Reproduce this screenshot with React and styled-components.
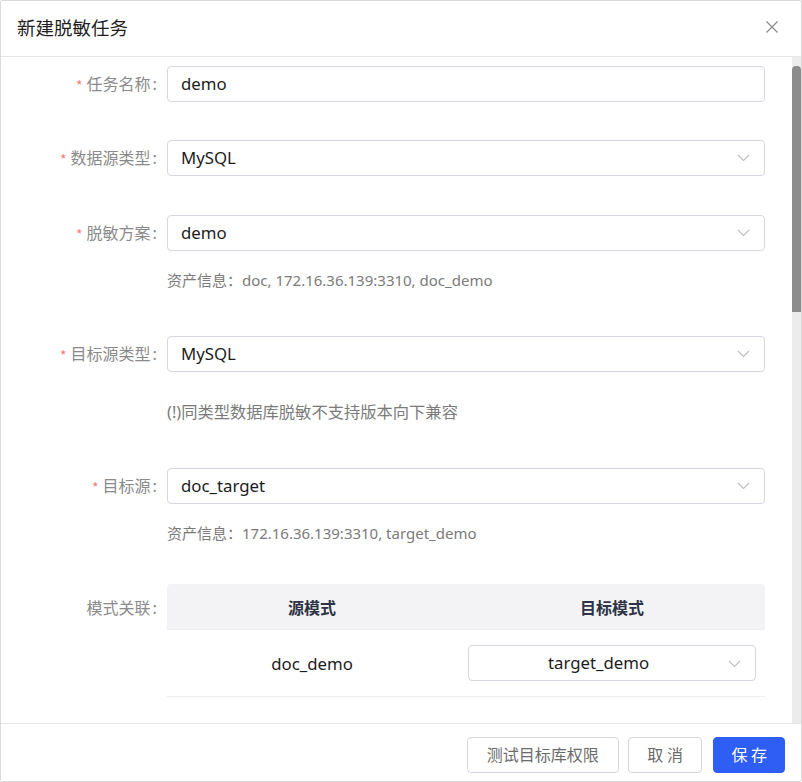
import React from 'react'
import styled, { createGlobalStyle } from 'styled-components'

const GlobalStyle = createGlobalStyle`
  html, body {
    margin: 0;
    padding: 0;
    background: #ffffff;
  }
  body {
    font-family: "Noto Sans", "Noto Sans CJK SC", sans-serif;
  }
  * {
    box-sizing: border-box;
  }
`

const Dialog = styled.div`
  width: 802px;
  height: 782px;
  display: flex;
  flex-direction: column;
  background: #fff;
  border: 1px solid #dadada;
  border-radius: 2px;
  overflow: hidden;
`

const Header = styled.div`
  height: 56px;
  flex: none;
  display: flex;
  align-items: center;
  justify-content: space-between;
  padding: 0 22px 0 16px;
  border-bottom: 1px solid #e6e6e6;
`

const Title = styled.div`
  font-size: 18.5px;
  color: #1f1f1f;
  font-family: "Noto Sans CJK SC", sans-serif;
  margin-top: -4px;
`

const CloseButton = styled.button`
  border: none;
  background: none;
  padding: 0;
  width: 14px;
  height: 14px;
  display: flex;
  margin-top: -4px;
  cursor: pointer;
`

const Body = styled.div`
  flex: 1;
  min-height: 0;
  display: flex;
`

const Content = styled.div`
  flex: 1;
  overflow: hidden;
  padding: 9px 27px 0 0;
`

// drawn scrollbar: the page has more form below the fold
const Rail = styled.div`
  width: 9px;
  flex: none;
  background: #ececec;
  padding-top: 9px;
`

const Thumb = styled.div`
  height: 246px;
  background: #8c8c8c;
  border-radius: 4px 4px 0 0;
`

const Item = styled.div`
  display: grid;
  grid-template-columns: 166px 1fr;
  margin-bottom: ${p => p.$bottom}px;
`

const Label = styled.label`
  height: 36px;
  display: flex;
  align-items: center;
  justify-content: flex-end;
  padding-bottom: 2px;
  font-size: 16px;
  color: #8a8a8a;
  font-family: "Noto Sans CJK SC", sans-serif;
  margin-top: ${p => p.$top || 0}px;
`

const Colon = styled.span`
  margin: 0 10px 0 2px;
`

const Star = styled.span`
  color: #f47c7c;
  font-size: 14px;
  margin-right: 4px;
  margin-top: 4px;
`

const Field = styled.div`
  display: flex;
  flex-direction: column;
`

const Box = styled.div`
  height: 36px;
  border: 1px solid #d6d8e1;
  border-radius: 4px;
  display: flex;
  align-items: center;
  justify-content: space-between;
  padding: 0 14px 2px 13px;
  font-size: 16.8px;
  color: #1c1c1c;
  background: #fff;
  position: relative;
`

const Chevron = styled.svg`
  width: 13px;
  height: 8px;
  flex: none;
  margin-top: 2px;
`

const FloatChevron = styled(Chevron)`
  position: absolute;
  right: 14px;
  top: 14px;
  margin: 0;
`

const Help = styled.div`
  font-size: ${p => p.$size || 15}px;
  line-height: 22px;
  color: #7b7b7b;
  margin-top: ${p => p.$top}px;
  font-family: "Noto Sans", "Noto Sans CJK SC", sans-serif;
`

const Table = styled.div`
  display: grid;
  grid-template-columns: 300px 1fr;
`

const HeadCell = styled.div`
  height: 46px;
  background: #f3f3f5;
  display: flex;
  align-items: center;
  justify-content: center;
  font-size: 16px;
  font-weight: 700;
  color: #2e3346;
  font-family: "Noto Sans CJK SC", sans-serif;
  border-bottom: 1px solid #eceef3;
  border-radius: ${p => (p.$first ? '4px 0 0 0' : '0 4px 0 0')};
  padding-right: ${p => (p.$first ? '10px' : '8px')};
`

const Cell = styled.div`
  height: 67px;
  display: flex;
  align-items: center;
  justify-content: center;
  font-size: 16.8px;
  color: #1c1c1c;
  border-bottom: 1px solid #eeeeee;
  padding: 0 ${p => (p.$first ? '10px' : '9px')} 0 ${p => (p.$first ? '0' : '1px')};
`

const CellSelect = styled(Box)`
  flex: 1;
  justify-content: center;
  padding-right: 40px;
`

const Footer = styled.div`
  height: 58px;
  flex: none;
  border-top: 1px solid #e6e6e6;
  display: flex;
  align-items: center;
  justify-content: flex-end;
  gap: 9px;
  padding: 4px 16px 0 0;
`

const Button = styled.button`
  height: 36px;
  padding: 0 ${p => p.$pad || 19}px 1px;
  margin-left: ${p => (p.$primary ? '2px' : '0')};
  border-radius: 4px;
  font-size: 16px;
  font-family: "Noto Sans CJK SC", sans-serif;
  border: 1px solid ${p => (p.$primary ? '#2f5ef4' : '#d6d8e1')};
  background: ${p => (p.$primary ? '#2f5ef4' : '#fff')};
  color: ${p => (p.$primary ? '#fff' : '#6b6b6b')};
  cursor: pointer;
`

const chevronPath = (
  <path d="M1 1 L6.5 6.5 L12 1" fill="none" stroke="#bdbdbd" strokeWidth="1.1" />
)

const Select = ({ value }) => (
  <Box>
    <span>{value}</span>
    <Chevron viewBox="0 0 13 8">{chevronPath}</Chevron>
  </Box>
)

const FormItem = ({ label, required = true, bottom, children }) => (
  <Item $bottom={bottom}>
    <Label>
      {required && <Star>*</Star>}
      {label}
      <Colon>:</Colon>
    </Label>
    <Field>{children}</Field>
  </Item>
)

export default function App() {
  return (
    <>
      <GlobalStyle />
      <Dialog>
        <Header>
          <Title>新建脱敏任务</Title>
          <CloseButton aria-label="关闭">
            <svg width="14" height="14" viewBox="0 0 14 14">
              <path d="M1.5 1.5 L12.5 12.5 M12.5 1.5 L1.5 12.5" stroke="#8a8a8a" strokeWidth="1.2" />
            </svg>
          </CloseButton>
        </Header>
        <Body>
          <Content>
            <FormItem label="任务名称" bottom={38}>
              <Box>demo</Box>
            </FormItem>
            <FormItem label="数据源类型" bottom={39}>
              <Select value="MySQL" />
            </FormItem>
            <FormItem label="脱敏方案" bottom={45}>
              <Select value="demo" />
              <Help $top={18}>资产信息：doc, 172.16.36.139:3310, doc_demo</Help>
            </FormItem>
            <FormItem label="目标源类型" bottom={45}>
              <Select value="MySQL" />
              <Help $top={29} $size={16.3}>(!)同类型数据库脱敏不支持版本向下兼容</Help>
            </FormItem>
            <FormItem label="目标源" bottom={40}>
              <Select value="doc_target" />
              <Help $top={18}>资产信息：172.16.36.139:3310, target_demo</Help>
            </FormItem>
            <Item $bottom={0}>
              <Label $top={6}>
                模式关联<Colon>:</Colon>
              </Label>
              <Table>
                <HeadCell $first>源模式</HeadCell>
                <HeadCell>目标模式</HeadCell>
                <Cell $first>doc_demo</Cell>
                <Cell>
                  <CellSelect>
                    <span>target_demo</span>
                    <FloatChevron viewBox="0 0 13 8">{chevronPath}</FloatChevron>
                  </CellSelect>
                </Cell>
              </Table>
            </Item>
          </Content>
          <Rail>
            <Thumb />
          </Rail>
        </Body>
        <Footer>
          <Button>测试目标库权限</Button>
          <Button $pad={18.5}>取 消</Button>
          <Button $primary $pad={17}>保 存</Button>
        </Footer>
      </Dialog>
    </>
  )
}
